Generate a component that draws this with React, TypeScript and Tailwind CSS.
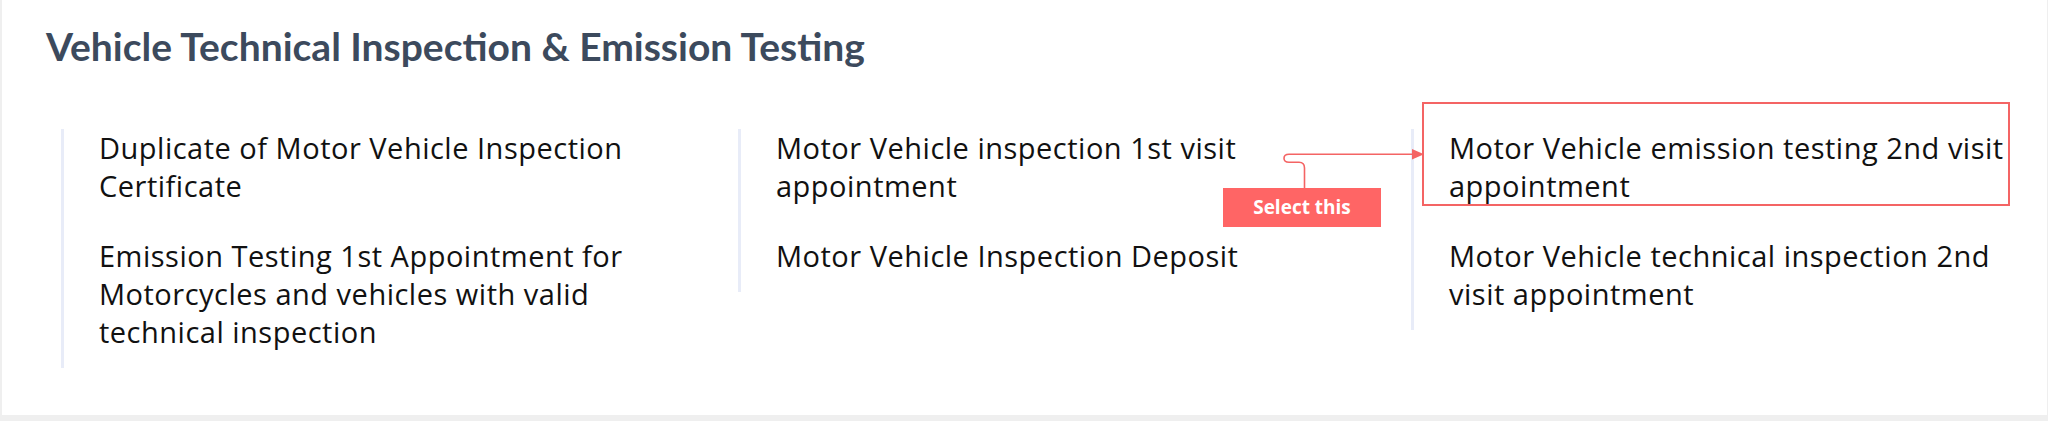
const columns: string[][][] = [
  [
    ["Duplicate of Motor Vehicle Inspection", "Certificate"],
    [
      "Emission Testing 1st Appointment for",
      "Motorcycles and vehicles with valid",
      "technical inspection",
    ],
  ],
  [
    ["Motor Vehicle inspection 1st visit", "appointment"],
    ["Motor Vehicle Inspection Deposit"],
  ],
  [
    ["Motor Vehicle emission testing 2nd visit", "appointment"],
    ["Motor Vehicle technical inspection 2nd", "visit appointment"],
  ],
];

function ServiceColumn({ items }: { items: string[][] }) {
  return (
    <ul className="flex flex-col gap-[32px] border-l-[3px] border-[#e8ecf8] pb-[17px] pl-[35px]">
      {items.map((lines) => (
        <li
          key={lines[0]}
          className="font-['Open_Sans',sans-serif] text-[29px] leading-[38px] tracking-[0.5px] text-[#111111]"
        >
          {lines.map((line) => (
            <span key={line} className="block whitespace-nowrap">
              {line}
            </span>
          ))}
        </li>
      ))}
    </ul>
  );
}

function Callout() {
  return (
    <>
      {/* highlight box around the target service */}
      <div className="pointer-events-none absolute left-[1420px] top-[102px] h-[104px] w-[588px] border-2 border-[#f46464]" />

      {/* connector from label to box */}
      <svg
        className="pointer-events-none absolute left-[1268px] top-[144px]"
        width="160"
        height="48"
        viewBox="1268 144 160 48"
      >
        <path
          d="M1302.5 188 V168 Q1302.5 162.3 1297 162.3 H1287 Q1282 162.3 1282 158.3 Q1282 154.3 1287 154.3 H1412"
          fill="none"
          stroke="#f46464"
          strokeWidth="1.6"
        />
        <polygon points="1410,149 1422,154.3 1410,159.6" fill="#f46464" />
      </svg>

      <div className="absolute left-[1221px] top-[188px] flex h-[39px] w-[158px] items-center justify-center bg-[#ff6565] font-['Open_Sans',sans-serif] text-[19px] font-bold text-white">
        Select this
      </div>
    </>
  );
}

export default function App() {
  return (
    <div className="h-[421px] bg-[#efefef] pl-[2px] pr-[1px] font-['Lato',sans-serif]">
      <section className="relative h-[415px] bg-white pl-[44px] pt-[24px]">
        <h1 className="text-[39px] font-bold leading-[44px] text-[#3c4a5d]">
          Vehicle Technical Inspection &amp; Emission Testing
        </h1>

        <div className="ml-[15px] mt-[61px] grid grid-cols-[677px_673px_600px] items-start">
          {columns.map((items, i) => (
            <ServiceColumn key={i} items={items} />
          ))}
        </div>

        <Callout />
      </section>
    </div>
  );
}
